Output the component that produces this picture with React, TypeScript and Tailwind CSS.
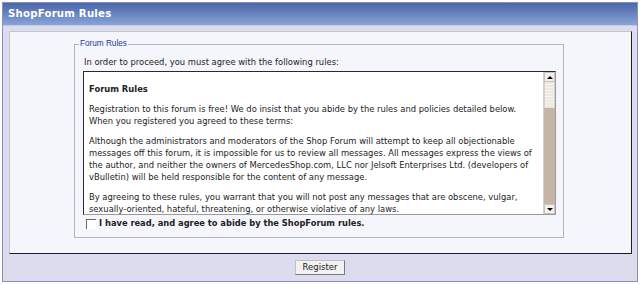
import React from 'react';

const rulesText: string[][] = [
  [
    'Registration to this forum is free! We do insist that you abide by the rules and policies detailed below.',
    'When you registered you agreed to these terms:',
  ],
  [
    'Although the administrators and moderators of the Shop Forum will attempt to keep all objectionable',
    'messages off this forum, it is impossible for us to review all messages. All messages express the views of',
    'the author, and neither the owners of MercedesShop.com, LLC nor Jelsoft Enterprises Ltd. (developers of',
    'vBulletin) will be held responsible for the content of any message.',
  ],
  [
    'By agreeing to these rules, you warrant that you will not post any messages that are obscene, vulgar,',
    'sexually-oriented, hateful, threatening, or otherwise violative of any laws.',
  ],
];

function Scrollbar() {
  return (
    <div className="w-[12px] flex flex-col bg-[#c4b5a6] border-l border-[#d8d0c8]">
      <div className="h-[10px] bg-[#f2f0ec] border border-[#c8c4bc] flex items-center justify-center">
        <div className="w-0 h-0 border-l-[3px] border-r-[3px] border-b-[3px] border-l-transparent border-r-transparent border-b-black" />
      </div>
      <div className="h-[26px] bg-[repeating-linear-gradient(180deg,#ece8e2_0px,#ece8e2_2px,#f6f4f0_2px,#f6f4f0_3px)] border-x border-[#d8d2ca]" />
      <div className="flex-1" />
      <div className="h-[10px] bg-[#f2f0ec] border border-[#c8c4bc] flex items-center justify-center">
        <div className="w-0 h-0 border-l-[3px] border-r-[3px] border-t-[3px] border-l-transparent border-r-transparent border-t-black" />
      </div>
    </div>
  );
}

export default function App() {
  return (
    <div className="w-[640px] h-[284px] bg-white pt-[2px] pl-[2px] font-['DejaVu_Sans',Verdana,sans-serif] text-[#222]">
      <div className="w-[636px] h-[280px] border border-[#8c8cc6] bg-[#dcdcee] flex flex-col">
        <div className="h-[23px] bg-gradient-to-b from-[#4b66a8] to-[#8aa3d6] border-b border-[#c0cbe6] flex items-center pl-[5px]">
          <span className="text-white font-bold text-[10.2px] tracking-[0.2px]">ShopForum Rules</span>
        </div>
        <div className="pl-[6px] pt-[5px]">
          <div className="w-[623px] h-[223px] bg-[#f5f5fc] border-t border-l border-[#c4c4cc] border-r border-b border-r-[#1c1c24] border-b-[#1c1c24] pt-[7px] pl-[64px]">
            <fieldset className="w-[490px] h-[199px] border border-[#b4b4bc] pl-[8px] pr-[7px]">
              <legend className="ml-[-4px] px-[1px] text-[8.2px] leading-[10px] text-[#2438a4] font-['Liberation_Sans',Tahoma,sans-serif]">Forum Rules</legend>
              <div className="mt-[7px] text-[8.4px] leading-[13px] whitespace-nowrap pl-[1px]">In order to proceed, you must agree with the following rules:</div>
              <div className="mt-[2px] h-[144px] flex border-t border-l border-[#2a2a2a] border-r border-b border-r-[#9a9a9a] border-b-[#9a9a9a] bg-white">
                <div className="flex-1 overflow-hidden pl-[5px] pt-[11px] text-[8.4px] leading-[12px] whitespace-nowrap">
                  <div className="font-bold">Forum Rules</div>
                  {rulesText.map((para, i) => (
                    <div key={i} className="mt-[8px]">
                      {para.map((line, j) => (
                        <div key={j}>{line}</div>
                      ))}
                    </div>
                  ))}
                </div>
                <Scrollbar />
              </div>
              <label className="mt-[3px] h-[11px] flex items-center gap-[3px] pl-[3px]">
                <span className="w-[10px] h-[10px] shrink-0 border-t border-l border-[#6a6a6a] bg-white" />
                <span className="font-bold text-[8.3px] leading-[11px] whitespace-nowrap">I have read, and agree to abide by the ShopForum rules.</span>
              </label>
            </fieldset>
          </div>
        </div>
        <div className="flex-1 flex items-center justify-center">
          <button className="w-[50px] h-[15px] bg-[#f2f2f2] border border-[#c0c0c0] border-r-[#7a7a7a] border-b-[#7a7a7a] text-[8.5px] leading-none text-[#222]">Register</button>
        </div>
      </div>
    </div>
  );
}
